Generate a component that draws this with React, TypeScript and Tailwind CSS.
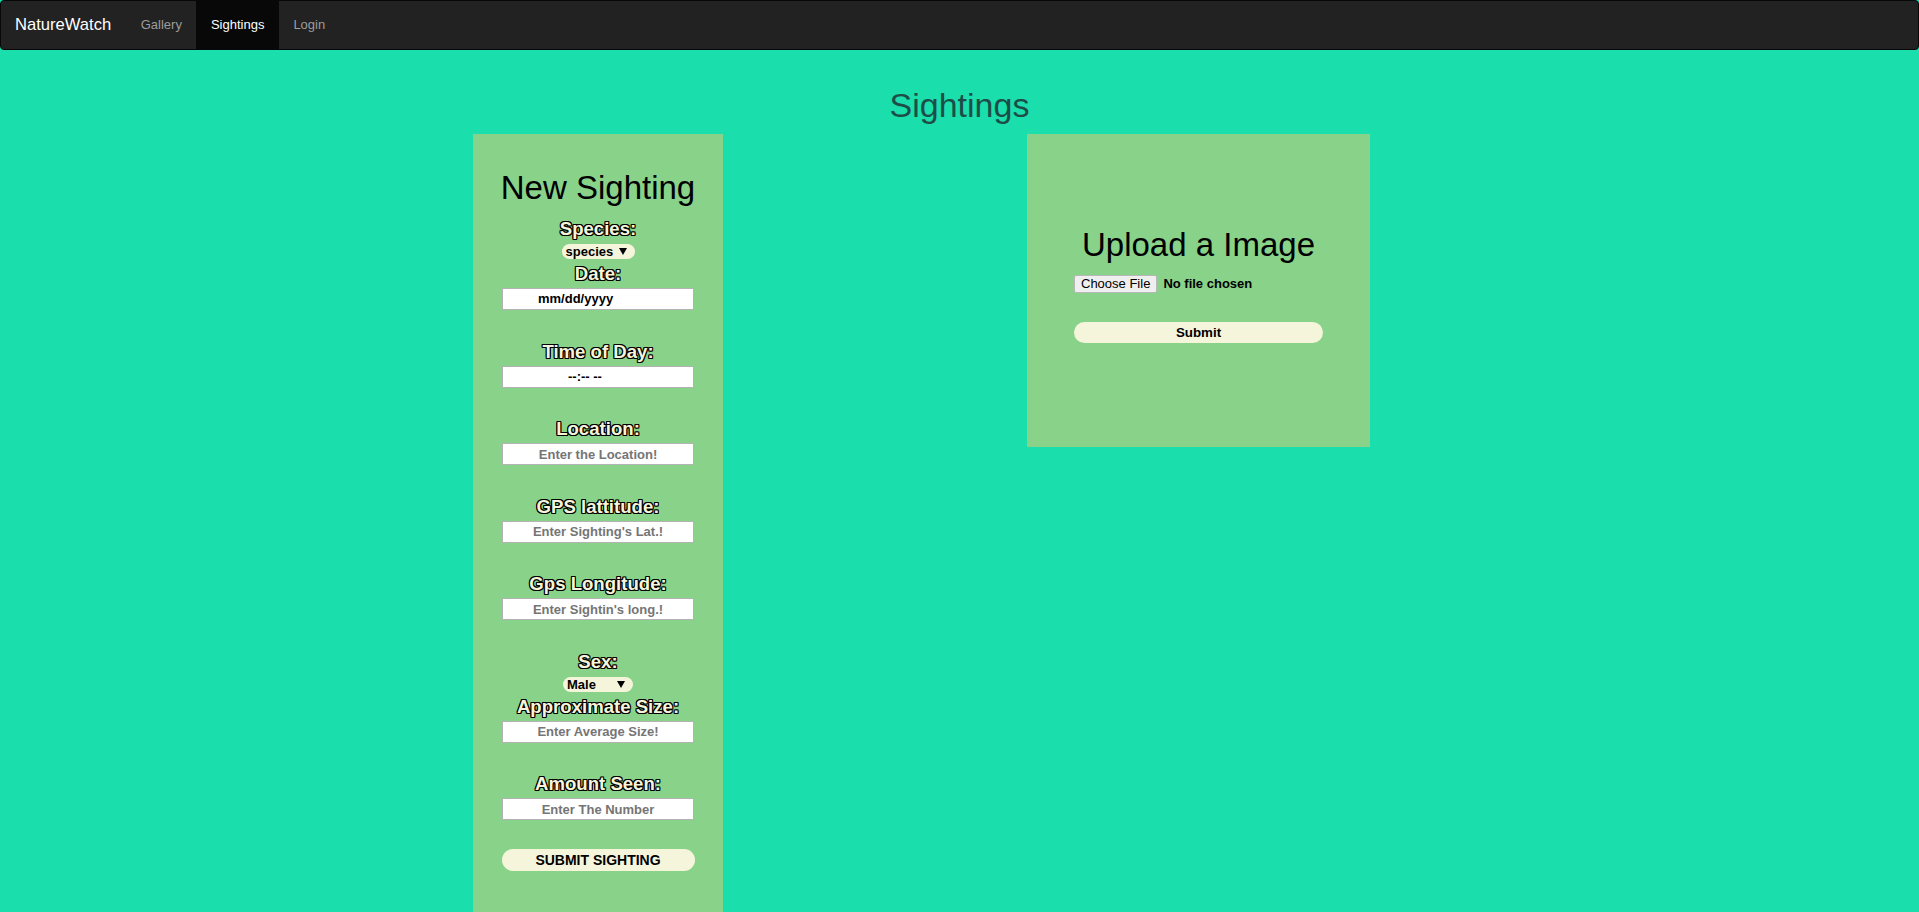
import React from "react";

const font = { fontFamily: '"Liberation Sans", Arial, sans-serif' };

function Label({ children, className = "" }: { children: React.ReactNode; className?: string }) {
  return (
    <div
      className={`h-[20px] text-[18.6px] font-bold leading-[20px] text-[#f5f5dc] [text-shadow:-1px_-1px_0_#000,1px_-1px_0_#000,-1px_1px_0_#000,1px_1px_0_#000,0_1px_0_#000,0_-1px_0_#000,1px_0_0_#000,-1px_0_0_#000] ${className}`}
    >
      {children}
    </div>
  );
}

function Pill({ value, width, className = "" }: { value: string; width: string; className?: string }) {
  return (
    <div
      className={`flex h-[15px] items-center justify-between rounded-full bg-[#f5f5dc] pl-[4px] pr-[8px] text-[13px] font-bold leading-[15px] text-black ${width} ${className}`}
    >
      <span>{value}</span>
      <svg width="8" height="7" viewBox="0 0 8 7" className="shrink-0">
        <polygon points="0,0 8,0 4,7" fill="#000" />
      </svg>
    </div>
  );
}

function TextField({ placeholder, className = "" }: { placeholder: string; className?: string }) {
  return (
    <input
      type="text"
      placeholder={placeholder}
      className={`mt-[4px] h-[22px] w-[192px] border border-[#b3b3b3] bg-white text-center text-[13px] font-bold text-black outline-none placeholder:text-[#757575] ${className}`}
    />
  );
}

function FakeField({ text, pad }: { text: string; pad: string }) {
  return (
    <div
      className={`mt-[4px] flex h-[22px] w-[192px] items-center border border-[#b3b3b3] bg-white text-[13px] font-bold text-black ${pad}`}
    >
      {text}
    </div>
  );
}

function NavBar() {
  return (
    <nav className="flex h-[50px] items-stretch rounded-[4px] border border-[#080808] bg-[#222222]">
      <a className="flex items-center pl-[14px] pr-[15px] text-[16.6px] leading-[20px] text-white">NatureWatch</a>
      <a className="flex items-center px-[14.5px] text-[13px] leading-[20px] text-[#9d9d9d]">Gallery</a>
      <a className="flex items-center bg-[#080808] px-[14.5px] text-[13px] leading-[20px] text-white">Sightings</a>
      <a className="flex items-center px-[14.5px] text-[13px] leading-[20px] text-[#9d9d9d]">Login</a>
    </nav>
  );
}

function NewSighting() {
  return (
    <form className="flex w-[250px] flex-col items-center bg-[#89d289] pb-[60px] pt-[36px]">
      <h2 className="text-[33px] leading-[36px] text-black">New Sighting</h2>

      <Label className="mt-[13px]">Species:</Label>
      <Pill value="species" width="w-[73px]" className="mt-[5px]" />

      <Label className="mt-[5px]">Date:</Label>
      <FakeField text="mm/dd/yyyy" pad="pl-[35px]" />

      <Label className="mt-[31.5px]">Time of Day:</Label>
      <FakeField text="--:-- --" pad="pl-[65px]" />

      <Label className="mt-[31.5px]">Location:</Label>
      <TextField placeholder="Enter the Location!" />

      <Label className="mt-[31.5px]">GPS lattitude:</Label>
      <TextField placeholder="Enter Sighting's Lat.!" />

      <Label className="mt-[31.5px]">Gps Longitude:</Label>
      <TextField placeholder="Enter Sightin's long.!" />

      <Label className="mt-[31.5px]">Sex:</Label>
      <Pill value="Male" width="w-[70px]" className="mt-[5px]" />

      <Label className="mt-[5px]">Approximate Size:</Label>
      <TextField placeholder="Enter Average Size!" />

      <Label className="mt-[31.5px]">Amount Seen:</Label>
      <TextField placeholder="Enter The Number" />

      <button
        type="button"
        className="mt-[29px] h-[22px] w-[193px] rounded-full bg-[#f5f5dc] text-[14px] font-bold uppercase leading-[22px] text-black"
      >
        Submit Sighting
      </button>
    </form>
  );
}

function UploadImage() {
  return (
    <div className="ml-[304px] flex h-[313px] w-[343px] flex-col items-center bg-[#89d289] pt-[93px]">
      <h2 className="text-[33px] leading-[36px] text-black">Upload a Image</h2>
      <div className="w-[249px]">
        <div className="mt-[11px] flex items-center">
          <span className="flex h-[18px] items-center rounded-[2px] border border-[#b8b8b8] bg-[#efefef] px-[6px] text-[13px] text-black">
            Choose File
          </span>
          <span className="ml-[6px] text-[13px] font-bold text-black">No file chosen</span>
        </div>
        <button
          type="button"
          className="mt-[28px] h-[21px] w-full rounded-full bg-[#f5f5dc] text-[13.33px] font-bold leading-[21px] text-black"
        >
          Submit
        </button>
      </div>
    </div>
  );
}

export default function App() {
  return (
    <div className="min-h-screen bg-[#1adeac]" style={font}>
      <NavBar />
      <main className="pt-[37px]">
        <h1 className="text-center text-[34px] leading-[36px] text-[#1e4d48]">Sightings</h1>
        <div className="mt-[11px] flex items-start pl-[473px]">
          <NewSighting />
          <UploadImage />
        </div>
      </main>
    </div>
  );
}
